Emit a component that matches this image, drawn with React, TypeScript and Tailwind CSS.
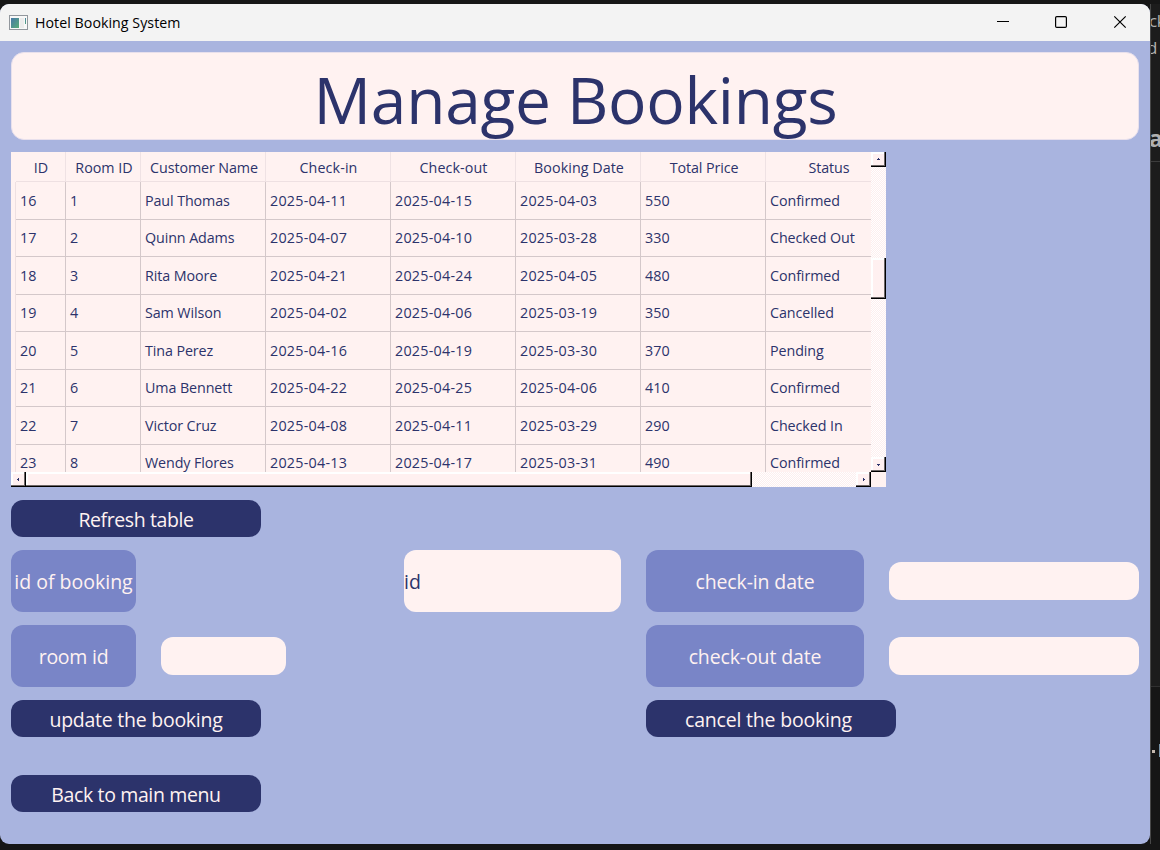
import type { ReactNode } from "react";

type Booking = [string, string, string, string, string, string, string, string];

const bookings: Booking[] = [
  ["16", "1", "Paul Thomas", "2025-04-11", "2025-04-15", "2025-04-03", "550", "Confirmed"],
  ["17", "2", "Quinn Adams", "2025-04-07", "2025-04-10", "2025-03-28", "330", "Checked Out"],
  ["18", "3", "Rita Moore", "2025-04-21", "2025-04-24", "2025-04-05", "480", "Confirmed"],
  ["19", "4", "Sam Wilson", "2025-04-02", "2025-04-06", "2025-03-19", "350", "Cancelled"],
  ["20", "5", "Tina Perez", "2025-04-16", "2025-04-19", "2025-03-30", "370", "Pending"],
  ["21", "6", "Uma Bennett", "2025-04-22", "2025-04-25", "2025-04-06", "410", "Confirmed"],
  ["22", "7", "Victor Cruz", "2025-04-08", "2025-04-11", "2025-03-29", "290", "Checked In"],
  ["23", "8", "Wendy Flores", "2025-04-13", "2025-04-17", "2025-03-31", "490", "Confirmed"],
];

const headers = ["ID", "Room ID", "Customer Name", "Check-in", "Check-out", "Booking Date", "Total Price", "Status"];
const headerStyle = [
  "pl-[1px]", "pl-[2px]", "pl-[2px] tracking-[-0.1px]", "pl-[1px] tracking-[0.1px]",
  "pl-[1px] tracking-[0.1px]", "pl-[2px] tracking-[0.05px]", "pl-[2px] tracking-[-0.1px]", "pl-[2px] tracking-[-0.1px]",
];
const columns = "grid grid-cols-[50px_75px_125px_125px_125px_125px_125px_125px]";
const cellTracking = [
  "tracking-[0px]", "tracking-[0px]", "tracking-[-0.1px]", "tracking-[0.25px]",
  "tracking-[0.25px]", "tracking-[0.25px]", "tracking-[0.1px]", "tracking-[-0.08px]",
];
const dither =
  "bg-[#fff0f0] bg-[repeating-conic-gradient(#ffffff_0_25%,#fdeeee_0_50%)] bg-[length:2px_2px]";
const raised =
  "shrink-0 bg-[#fff0f0] border-r border-b border-black shadow-[inset_-1px_-1px_0_#6d6666,inset_2px_2px_0_#ffffff]";

function Arrow({ points }: { points: string }) {
  return (
    <svg width="5" height="5" viewBox="0 0 5 5" shapeRendering="crispEdges">
      <path d={points} fill="#2c336b" />
    </svg>
  );
}

function TitleBar() {
  return (
    <div className="flex h-[37px] shrink-0 items-center bg-[#f3f3f3] pl-[9px]">
      <svg width="19" height="16" viewBox="0 0 19 16">
        <defs>
          <linearGradient id="pane" x1="0" y1="0" x2="1" y2="1">
            <stop offset="0" stopColor="#4878a8" />
            <stop offset="1" stopColor="#58ad78" />
          </linearGradient>
        </defs>
        <rect x="0.5" y="0.5" width="18" height="14" fill="#f8f8f8" stroke="#92979d" />
        <rect x="2" y="3" width="8" height="10" fill="url(#pane)" />
        <rect x="11" y="3" width="4" height="10" fill="#ececec" />
        <rect x="16" y="3" width="1" height="6" fill="url(#pane)" />
      </svg>
      <span className="ml-[7px] text-[14.2px] tracking-[0.05px] text-black">Hotel Booking System</span>
      <svg className="ml-auto mr-[23px] -mt-[2px]" width="130" height="14" viewBox="0 0 130 14" fill="none" stroke="#000">
        <path d="M0 6.5H12" shapeRendering="crispEdges" />
        <rect x="58.6" y="1.6" width="10.8" height="10.8" rx="1.2" strokeWidth="1.2" />
        <path d="M117.3 1.3L128.7 12.7M128.7 1.3L117.3 12.7" strokeWidth="1.2" />
      </svg>
    </div>
  );
}

function BookingTable() {
  return (
    <div className="mt-3 flex h-[335px] w-[875px] shrink-0 flex-col bg-[#fff2f1] text-[14.3px] text-[#2c336b]">
      <div className="flex h-[320px]">
        <div className="h-[320px] w-[860px] overflow-hidden pl-[5px]">
          <div className={`${columns} h-[30px] w-[875px] border-b border-[#eee0e2]`}>
            {headers.map((h, i) => (
              <div key={h} className={`flex items-center justify-center whitespace-nowrap border-r border-[#efe2e4] pt-[2px] ${headerStyle[i]}`}>
                {h}
              </div>
            ))}
          </div>
          {bookings.map((row, r) => (
            <div key={row[0]} className={`${columns} -ml-px w-[876px] border-l border-[#eee0e2] ${r % 2 === 0 ? "h-[38px]" : "h-[37px]"}`}>
              {row.map((value, c) => (
                <div key={c} className={`flex items-center whitespace-nowrap border-r border-b border-[#d4c8ca] pl-1 ${r % 2 === 0 ? "pt-px" : "pb-px"} ${cellTracking[c]}`}>
                  {value}
                </div>
              ))}
            </div>
          ))}
        </div>
        <div className={`flex w-[15px] flex-col ${dither}`}>
          <div className={`flex h-[15px] items-center justify-center ${raised}`}>
            <Arrow points="M2 1H3V2H4V3H1V2H2Z" />
          </div>
          <div className={`mt-[91px] h-[41px] ${raised}`} />
          <div className={`mt-auto flex h-[15px] items-center justify-center ${raised}`}>
            <Arrow points="M1 2H4V3H3V4H2V3H1Z" />
          </div>
        </div>
      </div>
      <div className="flex h-[15px]">
        <div className={`flex w-[860px] ${dither}`}>
          <div className={`flex w-[15px] items-center justify-center pl-px ${raised}`}>
            <Arrow points="M3 1V4H2V3H1V2H2V1Z" />
          </div>
          <div className={`w-[726px] ${raised}`} />
          <div className={`ml-auto flex w-[15px] items-center justify-center ${raised}`}>
            <Arrow points="M2 1H3V2H4V3H3V4H2Z" />
          </div>
        </div>
      </div>
    </div>
  );
}

function Button({ children, className = "" }: { children: ReactNode; className?: string }) {
  return (
    <button className={`flex h-[37px] w-[250px] shrink-0 items-center justify-center rounded-[12px] bg-[#2c336b] pt-[3px] text-[19.5px] text-[#fff2f1] ${className}`}>
      {children}
    </button>
  );
}

function Label({ children, className }: { children: ReactNode; className: string }) {
  return (
    <div className={`flex h-[62px] shrink-0 items-center justify-center whitespace-nowrap rounded-[12px] bg-[#7985c7] pt-[2px] text-[19.5px] text-[#fff2f1] ${className}`}>
      {children}
    </div>
  );
}

function Field({ className }: { className: string }) {
  return <input className={`h-[38px] shrink-0 rounded-[12px] bg-[#fff2f1] outline-none ${className}`} />;
}

function Backdrop() {
  return (
    <div className="flex w-[10px] shrink-0 flex-col overflow-hidden whitespace-nowrap border-l border-[#484848] bg-[#1c1c1c] text-[#b0b0b0]">
      <div className="-ml-[2px] h-7 pt-[4px] text-[17px] leading-[26px] tracking-[-0.5px]">ck</div>
      <div className="-ml-[4px] h-[93px] pt-[2px] text-[17px] leading-[28px]">d</div>
      <div className="-ml-[2px] h-[37px] border-b border-[#3c3c3c] text-[23px] font-bold leading-[26px]">as</div>
      <div className="h-[525px] border-b border-[#303030]" />
      <div className="flex grow items-start gap-[4px] bg-[#161616] pl-px pt-[57px]">
        <span className="mt-[6px] size-[3px] shrink-0 bg-[#c5b8ae]" />
        <span className="h-[13px] w-[2px] shrink-0 bg-[#7893a8]" />
      </div>
    </div>
  );
}

export default function App() {
  return (
    <div className="flex h-[850px] w-[1160px] flex-col overflow-hidden bg-[#161616] pt-1 font-['Open_Sans','Noto_Sans',sans-serif]">
      <div className="flex h-[840px]">
        <div className="flex w-[1150px] shrink-0 flex-col overflow-hidden rounded-[9px] bg-[#a9b4df]">
          <TitleBar />
          <main className="flex grow flex-col pl-[11px] pr-[11px] pt-[11px]">
            <h1 className="flex h-[88px] shrink-0 items-center justify-center rounded-[13px] border border-[#e8e0ec] bg-[#fff2f1] pt-[8px] pl-px text-[64px] leading-none tracking-[-0.27px] text-[#2c336b]">
              Manage Bookings
            </h1>
            <BookingTable />
            <Button className="mt-[13px] tracking-[-0.4px]">Refresh table</Button>
            <div className="mt-[13px] flex h-[62px] items-center">
              <Label className="w-[125px]">id of booking</Label>
              <input
                className="ml-[268px] h-[62px] w-[217px] rounded-[12px] bg-[#fff2f1] text-[19.5px] text-[#2c336b] outline-none"
                defaultValue="id"
              />
              <Label className="ml-[25px] w-[218px] tracking-[-0.13px]">check-in date</Label>
              <Field className="ml-[25px] w-[250px]" />
            </div>
            <div className="mt-[13px] flex h-[62px] items-center">
              <Label className="w-[125px] tracking-[-0.25px]">room id</Label>
              <Field className="ml-[25px] w-[125px]" />
              <Label className="ml-[360px] w-[218px] tracking-[-0.13px]">check-out date</Label>
              <Field className="ml-[25px] w-[250px]" />
            </div>
            <div className="mt-[13px] flex">
              <Button className="tracking-[-0.25px]">update the booking</Button>
              <Button className="ml-[385px] pr-[5px] tracking-[-0.2px]">cancel the booking</Button>
            </div>
            <Button className="mt-[38px] tracking-[-0.37px]">Back to main menu</Button>
          </main>
        </div>
        <Backdrop />
      </div>
    </div>
  );
}
